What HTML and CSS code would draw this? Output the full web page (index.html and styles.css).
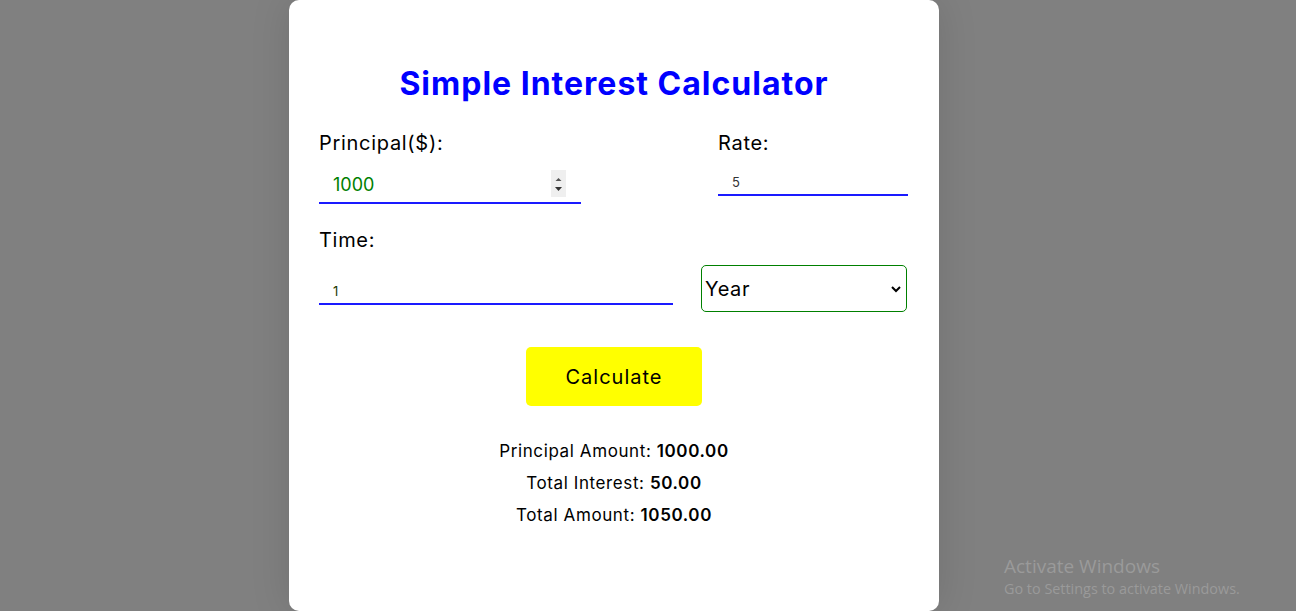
FILE: index.html
```html
<!DOCTYPE html>
<html lang="en">
<head>
<meta charset="utf-8">
<title>Simple Interest Calculator</title>
<link rel="stylesheet" href="styles.css">
</head>
<body>
<div class="card">
  <h1 class="title">Simple Interest Calculator</h1>
  <div class="row row-top">
    <div class="field field-principal">
      <label class="label">Principal($):</label>
      <div class="input-wrap">
        <input class="input input-principal" type="text" value="1000">
        <span class="spinner">
          <svg width="15" height="27" viewBox="0 0 15 27"><path d="M4.5 11 L7.5 8 L10.5 11 Z" fill="#555"/><path d="M4 17 L11 17 L7.5 21 Z" fill="#333"/></svg>
        </span>
      </div>
    </div>
    <div class="field field-rate">
      <label class="label">Rate:</label>
      <input class="input input-small" type="text" value="5">
    </div>
  </div>
  <div class="row row-mid">
    <div class="field field-time">
      <label class="label">Time:</label>
      <input class="input input-small input-time" type="text" value="1">
    </div>
    <div class="select">
      <span>Year</span>
      <svg width="12" height="8" viewBox="0 0 12 8"><path d="M2 2 L6 6 L10 2" fill="none" stroke="#000" stroke-width="2"/></svg>
    </div>
  </div>
  <div class="actions">
    <button class="btn">Calculate</button>
  </div>
  <div class="results">
    <p>Principal Amount: <b>1000.00</b></p>
    <p>Total Interest: <b>50.00</b></p>
    <p>Total Amount: <b>1050.00</b></p>
  </div>
</div>
<div class="watermark">
  <div class="wm-title">Activate Windows</div>
  <div class="wm-sub">Go to Settings to activate Windows.</div>
</div>
</body>
</html>
```

FILE: styles.css
```css
html, body {
  margin: 0;
  padding: 0;
}
body {
  background: #808080;
  height: 611px;
  overflow: hidden;
  display: flex;
  justify-content: flex-start;
  padding-left: 289px;
  font-family: "Inter", "Noto Sans", sans-serif;
  color: #000;
}
.card {
  width: 650px;
  height: 611px;
  box-sizing: border-box;
  background: #fff;
  border-radius: 10px;
  padding: 65px 30px 0 30px;
  box-shadow: 0 0 40px rgba(0, 0, 0, 0.12);
}
.title {
  margin: 0;
  text-align: center;
  color: #0000ff;
  font-size: 32px;
  letter-spacing: 1px;
  line-height: 38px;
  font-weight: 700;
}
.row {
  display: flex;
  justify-content: space-between;
  align-items: flex-start;
}
.row-top {
  margin-top: 25px;
}
.row-mid {
  margin-top: 21px;
}
.field {
  display: flex;
  flex-direction: column;
}
.field-principal { width: 262px; }
.field-rate { width: 190px; margin-right: 1px; }
.field-time { width: 354px; }
.label {
  font-size: 20px;
  letter-spacing: 0.7px;
  line-height: 30px;
  font-weight: 400;
}
.input-wrap {
  position: relative;
  margin-top: 12px;
}
.input {
  display: block;
  width: 100%;
  box-sizing: border-box;
  border: none;
  border-bottom: 2px solid #1a1aff;
  outline: none;
  background: transparent;
  font-family: inherit;
}
.input-principal {
  height: 34px;
  padding: 0 14px 4px;
  font-size: 18px;
  color: #008000;
}
.spinner {
  position: absolute;
  right: 15px;
  top: 0;
  width: 15px;
  height: 27px;
  background: #efefef;
}
.spinner svg { display: block; }
.input-small {
  height: 27px;
  padding: 0 14px;
  font-size: 13px;
  color: #333;
  margin-top: 11px;
}
.input-time {
  margin-top: 23px;
  color: #1a3a00;
}
.select {
  margin-top: 40px;
  margin-right: 2px;
  width: 206px;
  height: 47px;
  box-sizing: border-box;
  border: 1px solid #008000;
  border-radius: 5px;
  display: flex;
  align-items: center;
  justify-content: space-between;
  padding: 0 4px 0 3px;
  font-size: 20px;
  letter-spacing: 0.6px;
}
.select svg { display: block; }
.actions {
  display: flex;
  justify-content: center;
  margin-top: 35px;
}
.btn {
  width: 176px;
  height: 59px;
  background: #ffff00;
  border: none;
  border-radius: 5px;
  font-family: inherit;
  font-size: 20px;
  letter-spacing: 1px;
  color: #000;
  padding: 0;
}
.results {
  margin-top: 29px;
  text-align: center;
  font-size: 17px;
  letter-spacing: 0.6px;
}
.results p {
  margin: 0;
  line-height: 32px;
}
.results b {
  font-weight: 600;
}
.watermark {
  position: absolute;
  left: 1004px;
  top: 554px;
  color: #9a9a9a;
  font-family: "Open Sans", "Noto Sans", sans-serif;
}
.wm-title {
  font-size: 19px;
  line-height: 24px;
}
.wm-sub {
  font-size: 14.4px;
  line-height: 22px;
}
```
